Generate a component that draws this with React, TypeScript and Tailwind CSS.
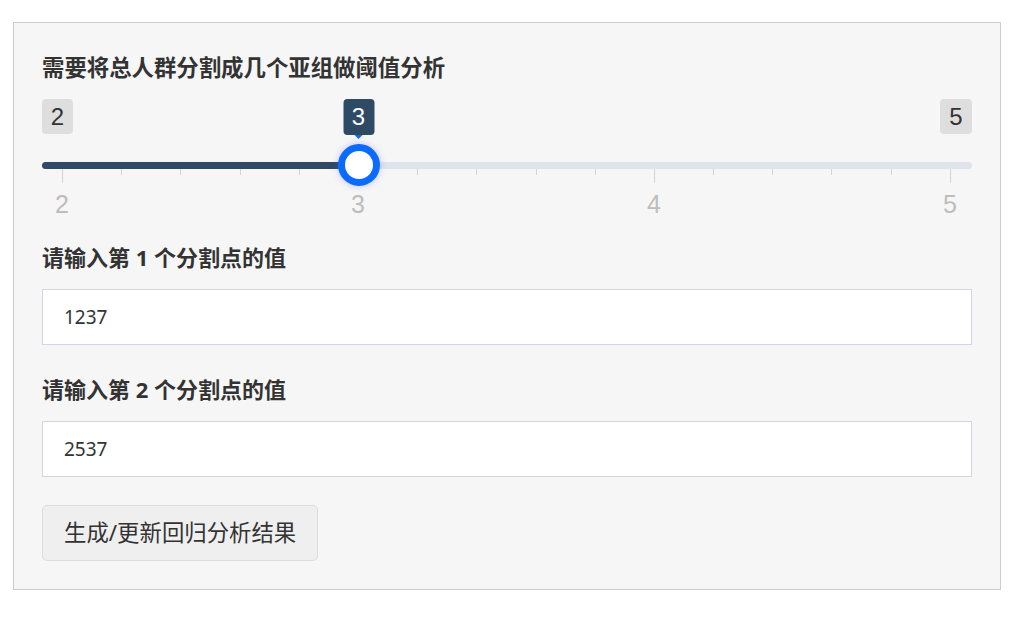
import React from 'react'

const FONT = { fontFamily: '"Noto Sans", "Noto Sans CJK SC", sans-serif' }
const ARIAL = { fontFamily: '"Liberation Sans", Arial, sans-serif' }

const MIN = 2
const MAX = 5
const VALUE = 3
// px from the track's left edge to the "2" mark, and px per unit
const START = 20
const STEP = 296

function RangeSlider() {
  const ticks = Array.from({ length: (MAX - MIN) * 5 + 1 }, (_, i) => i % 5 === 0)
  const grid = [2, 3, 4, 5]
  const handleX = START + (VALUE - MIN) * STEP

  return (
    <div className="relative w-full pt-[17px] pb-[4px]" style={ARIAL}>
      <div className="flex justify-between">
        <div className="flex h-[35px] w-[31px] items-center justify-center rounded-[4px] bg-[#dedede] text-[24px] text-[#333]">
          {MIN}
        </div>
        <div className="flex h-[35px] w-[32px] items-center justify-center rounded-[4px] bg-[#dedede] text-[24px] text-[#333]">
          {MAX}
        </div>
      </div>

      <div className="mt-[28px] h-[7px] rounded-full bg-[#dee4ec]">
        <div className="h-full rounded-l-full bg-[#2e4a65]" style={{ width: handleX }} />
      </div>

      <div className="ml-[20px] mr-[21px] flex h-[14px] items-start justify-between">
        {ticks.map((major, i) => (
          <div key={i} className={`w-px bg-[#d3d3d3] ${major ? 'h-[14px]' : 'h-[6px]'}`} />
        ))}
      </div>

      <div className="ml-[5px] mr-[7px] mt-[7px] flex justify-between">
        {grid.map((v) => (
          <div key={v} className="w-[30px] text-center text-[25px] leading-[28px] text-[#bdbdbd]">
            {v}
          </div>
        ))}
      </div>

      {/* value bubble */}
      <div
        className="absolute top-[17px] flex h-[36px] w-[31px] -translate-x-1/2 items-center justify-center rounded-[4px] bg-[#2e4a65] text-[24px] text-white"
        style={{ left: handleX + 0.5 }}
      >
        {VALUE}
        <div className="absolute left-1/2 top-full h-0 w-0 -translate-x-1/2 border-l-[4px] border-r-[4px] border-t-[4px] border-l-transparent border-r-transparent border-t-[#0b6bff]" />
      </div>

      {/* handle */}
      <div
        className="absolute top-[62px] h-[42px] w-[42px] -translate-x-1/2 rounded-full border-[7px] border-[#0b6bff] bg-white shadow-[0_0_6px_rgba(80,80,255,0.35)]"
        style={{ left: handleX + 0.5 }}
      />
    </div>
  )
}

function TextInput({ value }: { value: string }) {
  return (
    <input
      type="text"
      defaultValue={value}
      className="mt-[18px] block h-[56px] w-full border border-[#d3d5e2] bg-white px-[21px] text-[19px] text-[#333] outline-none"
      style={FONT}
    />
  )
}

export default function App() {
  return (
    <div className="min-h-screen bg-white pl-[13px] pt-[22px]" style={FONT}>
      <div className="w-[988px] border border-[#cccccc] bg-[#f6f6f6] px-[28px] pb-[28px] pt-[31px]">
        <div className="text-[22.4px] font-bold leading-[28px] text-[#333]">
          需要将总人群分割成几个亚组做阈值分析
        </div>
        <RangeSlider />

        <div className="mt-[21px] text-[22px] font-bold leading-[28px] text-[#333]">
          请输入第 1 个分割点的值
        </div>
        <TextInput value="1237" />

        <div className="mt-[30px] text-[22px] font-bold leading-[28px] text-[#333]">
          请输入第 2 个分割点的值
        </div>
        <TextInput value="2537" />

        <button className="mt-[28px] h-[56px] rounded-[5px] border border-[#dcdcdc] bg-[#efefef] px-[21px] text-[22.4px] text-[#333]">
          生成/更新回归分析结果
        </button>
      </div>
    </div>
  )
}
